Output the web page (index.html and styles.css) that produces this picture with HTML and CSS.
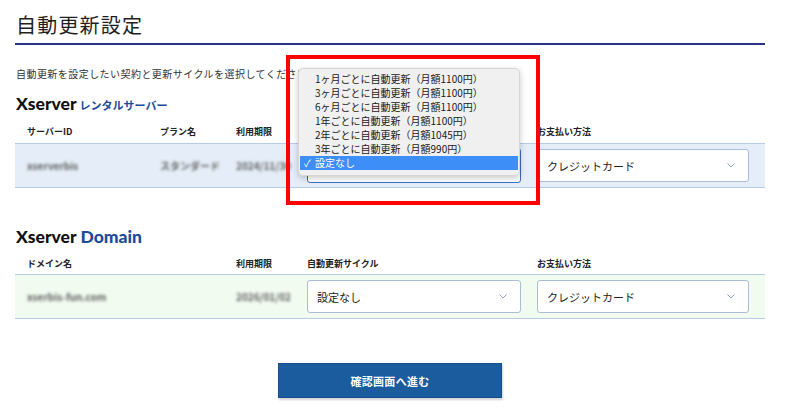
FILE: index.html
```html
<!DOCTYPE html>
<html lang="ja">
<head>
<meta charset="utf-8">
<title>自動更新設定</title>
<link rel="stylesheet" href="styles.css">
</head>
<body>
<div class="page">
  <h1 class="title">自動更新設定</h1>
  <p class="desc">自動更新を設定したい契約と更新サイクルを選択してください。</p>

  <h2 class="brand"><span class="brand-x">Xserver</span><span class="brand-sub">レンタルサーバー</span></h2>
  <div class="thead">
    <span>サーバーID</span><span>プラン名</span><span>利用期限</span><span>自動更新サイクル</span><span>お支払い方法</span>
  </div>
  <div class="trow trow-blue">
    <span class="blur">xserverbis</span>
    <span class="blur">スタンダード</span>
    <span class="blur">2024/11/30</span>
    <div class="select select-focus"><span>設定なし</span><svg class="chev" viewBox="0 0 8 5" width="8" height="5"><path d="M0.5 0.5 L4 4 L7.5 0.5" fill="none" stroke="#8aa3c4" stroke-width="1"/></svg></div>
    <div class="select select-pay"><span>クレジットカード</span><svg class="chev" viewBox="0 0 8 5" width="8" height="5"><path d="M0.5 0.5 L4 4 L7.5 0.5" fill="none" stroke="#8aa3c4" stroke-width="1"/></svg></div>
  </div>

  <h2 class="brand brand-domain"><span class="brand-x">Xserver</span><span class="brand-dom">Domain</span></h2>
  <div class="thead thead-domain">
    <span>ドメイン名</span><span>利用期限</span><span>自動更新サイクル</span><span>お支払い方法</span>
  </div>
  <div class="trow trow-green trow-domain">
    <span class="blur">xserbis-fun.com</span>
    <span class="blur">2026/01/02</span>
    <div class="select"><span>設定なし</span><svg class="chev" viewBox="0 0 8 5" width="8" height="5"><path d="M0.5 0.5 L4 4 L7.5 0.5" fill="none" stroke="#8aa3c4" stroke-width="1"/></svg></div>
    <div class="select select-pay"><span>クレジットカード</span><svg class="chev" viewBox="0 0 8 5" width="8" height="5"><path d="M0.5 0.5 L4 4 L7.5 0.5" fill="none" stroke="#8aa3c4" stroke-width="1"/></svg></div>
  </div>

  <div class="actions">
    <button class="btn" type="button">確認画面へ進む</button>
  </div>

  <ul class="menu">
    <li>1ヶ月ごとに自動更新（月額1100円）</li>
    <li>3ヶ月ごとに自動更新（月額1100円）</li>
    <li>6ヶ月ごとに自動更新（月額1100円）</li>
    <li>1年ごとに自動更新（月額1100円）</li>
    <li>2年ごとに自動更新（月額1045円）</li>
    <li>3年ごとに自動更新（月額990円）</li>
    <li class="menu-sel"><span class="check">✓</span>設定なし</li>
  </ul>
  <div class="highlight-box"></div>
</div>
</body>
</html>
```

FILE: styles.css
```css
* { box-sizing: border-box; }
html, body { margin: 0; padding: 0; background: #fff; }
body {
  font-family: "Noto Sans CJK JP", "Noto Sans", sans-serif;
  color: #222;
}
.page {
  position: relative;
  width: 800px;
  height: 413px;
  padding: 0 35px 0 15px;
  overflow: hidden;
}
.title {
  margin: 0;
  padding: 12px 0 6px 1px;
  font-size: 20px;
  line-height: 25px;
  font-weight: 400;
  letter-spacing: 1.2px;
  color: #1f1f1f;
  border-bottom: 2px solid #2b3484;
}
.desc {
  margin: 21px 0 0 1px;
  font-size: 10px;
  line-height: 16px;
  letter-spacing: 0.45px;
  color: #333;
  white-space: nowrap;
}
.brand {
  margin: 12px 0 0 1px;
  display: flex;
  align-items: baseline;
  line-height: 20px;
}
.brand-x {
  font-family: "Lato", "Inter", sans-serif;
  font-weight: 900;
  font-size: 17.5px;
  color: #111;
  letter-spacing: 0;
  margin-right: 3px;
}
.brand-sub {
  font-size: 11px;
  font-weight: 700;
  color: #1d4b9a;
}
.brand-dom {
  font-family: "Lato", "Inter", sans-serif;
  font-weight: 900;
  font-size: 17.5px;
  color: #1d4b9a;
  margin-left: 1px;
}
.brand-domain { margin-top: 39px; }
.thead {
  margin-top: 10px;
  display: grid;
  grid-template-columns: 133px 76px 71px 230px 1fr;
  padding-left: 12px;
  font-size: 9px;
  line-height: 14px;
  font-weight: 700;
  color: #222;
}
.thead-domain { grid-template-columns: 209px 71px 230px 1fr; }
.trow {
  margin-top: 4px;
  height: 45px;
  display: grid;
  grid-template-columns: 133px 76px 71px 230px 1fr;
  align-items: center;
  padding: 0 14px 0 12px;
  border-top: 1px solid #b7cbe3;
  border-bottom: 1px solid #b7cbe3;
  font-size: 10px;
}
.trow-domain { grid-template-columns: 209px 71px 230px 1fr; margin-top: 3px; }
.trow-blue { background: #e5eef8; }
.trow-green { background: #f1fbf0; }
.blur {
  color: #5e5e5e;
  font-weight: 700;
  filter: blur(1.4px);
  white-space: nowrap;
}
.select {
  width: 214px;
  height: 33px;
  background: #fff;
  border: 1px solid #aabdd5;
  border-radius: 3px;
  display: flex;
  align-items: center;
  justify-content: space-between;
  padding: 0 13px 0 9px;
  font-size: 11px;
  color: #222;
}
.select-focus { border-color: #3a6fc4; height: 35px; }
.select-pay { width: 212px; }
.chev { display: block; }
.actions {
  margin-top: 44px;
  display: flex;
  justify-content: center;
}
.btn {
  width: 224px;
  height: 35px;
  border: 1px solid #164f8c;
  background: #1b5c9f;
  color: #fff;
  font-family: "Noto Sans CJK JP", sans-serif;
  font-weight: 700;
  font-size: 11px;
  letter-spacing: 0.3px;
  box-shadow: 1px 2px 2px rgba(0,0,0,0.18);
}
.menu {
  position: absolute;
  left: 298px;
  top: 68px;
  width: 222px;
  margin: 0;
  padding: 3px 4px 5px 4px;
  list-style: none;
  background: #f0f0f0;
  border: 1px solid #d6d6d6;
  border-radius: 5px;
  box-shadow: 0 2px 6px rgba(0,0,0,0.22);
  font-size: 10px;
  line-height: 14px;
  color: #1a1a1a;
}
.menu li {
  padding-left: 12px;
  white-space: nowrap;
}
.menu .menu-sel {
  position: relative;
  background: #3d8ef6;
  color: #fff;
  margin: 0 -3px;
  padding-left: 15px;
}
.check {
  position: absolute;
  left: 4px;
  font-size: 10px;
}
.highlight-box {
  position: absolute;
  left: 286px;
  top: 55px;
  width: 254px;
  height: 150px;
  border: 4px solid #ff0000;
}
```
